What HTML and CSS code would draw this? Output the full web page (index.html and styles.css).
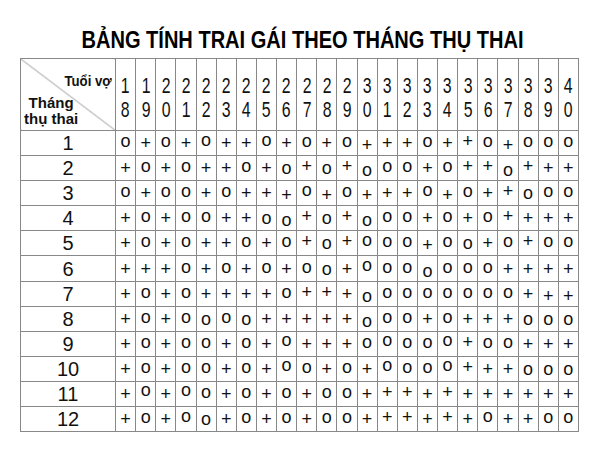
FILE: index.html
```html
<!DOCTYPE html>
<html lang="vi">
<head>
<meta charset="utf-8">
<title>Bảng tính trai gái theo tháng thụ thai</title>
<link rel="stylesheet" href="styles.css">
</head>
<body>
<h1 class="title">BẢNG TÍNH TRAI GÁI THEO THÁNG THỤ THAI</h1>
<table class="chart">
<colgroup><col class="c-label"></colgroup>
<thead>
<tr>
<th class="corner"><span class="wife"><span class="sq">Tuổi vợ</span></span><span class="month">Tháng<br>thụ thai</span></th>
<th><span class="age">1<br>8</span></th>
<th><span class="age">1<br>9</span></th>
<th><span class="age">2<br>0</span></th>
<th><span class="age">2<br>1</span></th>
<th><span class="age">2<br>2</span></th>
<th><span class="age">2<br>3</span></th>
<th><span class="age">2<br>4</span></th>
<th><span class="age">2<br>5</span></th>
<th><span class="age">2<br>6</span></th>
<th><span class="age">2<br>7</span></th>
<th><span class="age">2<br>8</span></th>
<th><span class="age">2<br>9</span></th>
<th><span class="age">3<br>0</span></th>
<th><span class="age">3<br>1</span></th>
<th><span class="age">3<br>2</span></th>
<th><span class="age">3<br>3</span></th>
<th><span class="age">3<br>4</span></th>
<th><span class="age">3<br>5</span></th>
<th><span class="age">3<br>6</span></th>
<th><span class="age">3<br>7</span></th>
<th><span class="age">3<br>8</span></th>
<th><span class="age">3<br>9</span></th>
<th><span class="age">4<br>0</span></th>
</tr>
</thead>
<tbody>
<tr><th>1</th><td class="h">o</td><td>+</td><td class="h">o</td><td>+</td><td class="hh">o</td><td>+</td><td>+</td><td class="hh">o</td><td>+</td><td class="h">o</td><td>+</td><td class="h">o</td><td class="l">+</td><td>+</td><td>+</td><td class="h">o</td><td>+</td><td class="h">+</td><td class="h">o</td><td class="l">+</td><td class="h">o</td><td class="h">o</td><td class="h">o</td></tr>
<tr><th>2</th><td>+</td><td class="h">o</td><td>+</td><td class="h">o</td><td>+</td><td>+</td><td class="h">o</td><td>+</td><td>o</td><td class="h">+</td><td>o</td><td class="h">+</td><td class="l">o</td><td class="h">o</td><td class="h">o</td><td>+</td><td class="h">o</td><td class="h">+</td><td class="h">+</td><td class="l">o</td><td class="h">+</td><td>+</td><td>+</td></tr>
<tr><th>3</th><td class="h">o</td><td>+</td><td class="h">o</td><td class="h">o</td><td>+</td><td class="h">o</td><td>+</td><td>+</td><td class="l">+</td><td class="hh">o</td><td class="l">+</td><td class="h">o</td><td class="l">+</td><td>+</td><td>+</td><td class="hh">o</td><td class="l">+</td><td class="h">o</td><td>+</td><td class="h">+</td><td>o</td><td class="h">o</td><td class="h">o</td></tr>
<tr><th>4</th><td>+</td><td class="h">o</td><td>+</td><td class="h">o</td><td class="h">o</td><td>+</td><td>+</td><td>o</td><td class="l">o</td><td class="h">+</td><td>o</td><td class="h">+</td><td class="l">o</td><td class="h">o</td><td class="h">o</td><td>+</td><td class="h">o</td><td>+</td><td class="h">o</td><td class="h">+</td><td>+</td><td>+</td><td>+</td></tr>
<tr><th>5</th><td>+</td><td class="h">o</td><td>+</td><td class="h">o</td><td>+</td><td>+</td><td class="h">o</td><td>+</td><td class="h">o</td><td class="h">+</td><td>o</td><td class="h">+</td><td class="hh">o</td><td class="h">o</td><td class="h">o</td><td class="l">+</td><td class="h">o</td><td>o</td><td>+</td><td class="h">o</td><td class="h">+</td><td class="h">o</td><td class="h">o</td></tr>
<tr><th>6</th><td>+</td><td>+</td><td>+</td><td class="h">o</td><td>+</td><td class="h">o</td><td>+</td><td class="h">o</td><td>+</td><td class="h">o</td><td>o</td><td>+</td><td class="hh">o</td><td class="h">o</td><td class="h">o</td><td class="l">o</td><td class="h">o</td><td class="h">o</td><td class="h">o</td><td>+</td><td>+</td><td>+</td><td>+</td></tr>
<tr><th>7</th><td>+</td><td class="h">o</td><td>+</td><td class="h">o</td><td>+</td><td>+</td><td>+</td><td>+</td><td class="h">o</td><td class="h">+</td><td class="h">+</td><td>+</td><td class="l">o</td><td class="h">o</td><td class="h">o</td><td class="h">o</td><td class="h">o</td><td class="h">o</td><td class="h">o</td><td class="h">o</td><td>+</td><td class="l">+</td><td class="l">+</td></tr>
<tr><th>8</th><td>+</td><td class="h">o</td><td>+</td><td class="h">o</td><td>o</td><td class="h">o</td><td>o</td><td>+</td><td>+</td><td>+</td><td>+</td><td>+</td><td class="l">o</td><td class="h">o</td><td class="h">o</td><td>+</td><td class="h">o</td><td>+</td><td>+</td><td>+</td><td>o</td><td>o</td><td>o</td></tr>
<tr><th>9</th><td>+</td><td class="h">o</td><td>+</td><td class="h">o</td><td class="h">o</td><td>+</td><td class="h">o</td><td>+</td><td class="hh">o</td><td>+</td><td>+</td><td>+</td><td class="h">o</td><td class="hh">o</td><td class="h">o</td><td class="h">o</td><td class="hh">o</td><td class="h">+</td><td class="h">o</td><td class="h">o</td><td>+</td><td>+</td><td>+</td></tr>
<tr><th>10</th><td>+</td><td class="h">o</td><td>+</td><td class="h">o</td><td class="h">o</td><td>+</td><td class="h">o</td><td>+</td><td class="hh">o</td><td class="h">o</td><td>+</td><td class="h">o</td><td>+</td><td class="hh">o</td><td class="h">o</td><td class="h">o</td><td class="hh">o</td><td class="h">+</td><td>+</td><td>+</td><td>o</td><td>o</td><td>o</td></tr>
<tr><th>11</th><td>+</td><td class="hh">o</td><td>+</td><td class="hh">o</td><td class="h">o</td><td>+</td><td class="h">o</td><td>+</td><td class="h">o</td><td>+</td><td class="h">o</td><td class="h">o</td><td>+</td><td class="h">+</td><td class="h">+</td><td>+</td><td class="h">+</td><td>+</td><td>+</td><td>+</td><td>+</td><td>+</td><td>+</td></tr>
<tr><th>12</th><td>+</td><td class="h">o</td><td>+</td><td class="hh">o</td><td>o</td><td>+</td><td class="h">o</td><td>+</td><td class="h">o</td><td>+</td><td class="h">o</td><td class="h">o</td><td>+</td><td class="h">+</td><td class="h">+</td><td>+</td><td class="h">+</td><td>+</td><td class="hh">o</td><td>+</td><td>+</td><td class="h">o</td><td class="h">o</td></tr>
</tbody>
</table>
</body>
</html>
```
FILE: styles.css
```css
html, body {
  margin: 0;
  padding: 0;
  background: #fff;
}

body {
  width: 600px;
  height: 450px;
  overflow: hidden;
  font-family: "Liberation Sans", Arial, sans-serif;
  color: #111;
}

.title {
  margin: 0;
  height: 58px;
  box-sizing: border-box;
  padding: 26px 0 0 6px;
  font-size: 24px;
  font-weight: bold;
  line-height: normal;
  text-align: center;
  color: #000;
  transform: scaleX(0.835);
}

.chart {
  margin-left: 20px;
  width: 559px;
  table-layout: fixed;
  border-collapse: collapse;
}

.c-label {
  width: 95px;
}

.chart th,
.chart td {
  border: 1px solid #888;
  padding: 0;
  text-align: center;
  vertical-align: middle;
}

.chart thead tr {
  height: 71px;
}

.chart tbody tr {
  height: 25.1px;
}

.corner {
  vertical-align: top !important;
  padding: 14px 3px 3px 3px !important;
  text-align: left !important;
  font-size: 15px;
  font-weight: bold;
  line-height: 16px;
  background: linear-gradient(to top right, transparent calc(50% - 0.7px), #888 50%, transparent calc(50% + 0.7px));
}

.wife {
  display: block;
  text-align: right;
}

.sq {
  display: inline-block;
  transform: scaleX(0.88);
  transform-origin: right center;
}

.month {
  display: inline-block;
  margin-top: 6px;
  text-align: center;
}

.chart thead th:not(.corner) {
  padding-top: 7px;
  font-weight: normal;
}

.age {
  display: inline-block;
  font-size: 22px;
  line-height: 24px;
  transform: scaleX(0.72);
}

.chart tbody th {
  font-size: 20px;
  font-weight: normal;
  line-height: 20px;
}

.chart td {
  font-size: 18px;
  line-height: 14px;
}

.chart td.h {
  padding-bottom: 4px;
}

.chart td.hh {
  padding-bottom: 7px;
}

.chart td.l {
  padding-top: 4px;
}
```
